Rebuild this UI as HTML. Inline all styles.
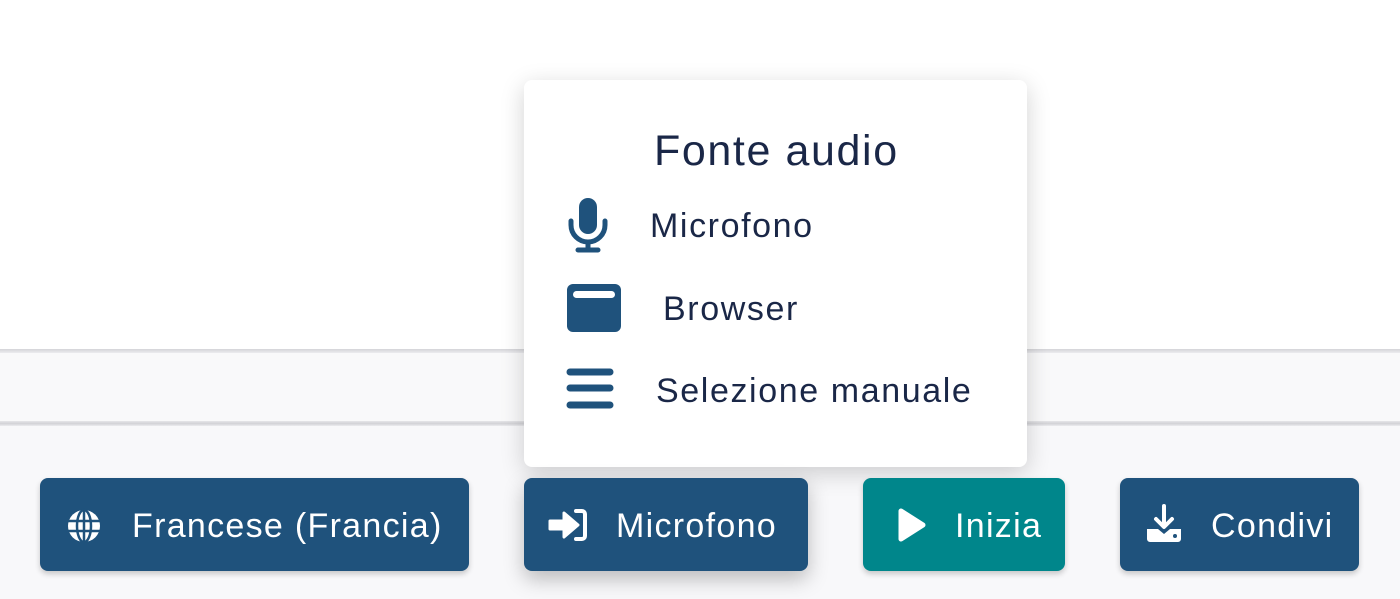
<!DOCTYPE html>
<html><head><style>
*{margin:0;padding:0;box-sizing:border-box}
body{width:1400px;height:599px;overflow:hidden;background:#f8f8fa;position:relative;font-family:"Liberation Sans",sans-serif}
.top{position:absolute;left:0;top:0;width:1400px;height:350px;background:#fff}
.l1{position:absolute;left:0;top:349px;width:1400px;height:4px;background:linear-gradient(#d4d4d8,#ececef)}
.band{position:absolute;left:0;top:353px;width:1400px;height:69px;background:#f9f9fa}
.l2{position:absolute;left:0;top:421px;width:1400px;height:5px;background:linear-gradient(#e6e6e9,#d2d2d6,#ececef)}
.pop{position:absolute;left:524px;top:80px;width:503px;height:387px;background:#fff;border-radius:8px;box-shadow:0 6px 24px rgba(0,0,0,.18)}
.t{position:absolute;color:#1a2747;white-space:nowrap;letter-spacing:1.6px}
.btn{position:absolute;top:478px;height:93px;border-radius:8px;background:#1f527c;box-shadow:0 3px 6px rgba(0,0,0,.2);color:#fff;font-size:34px;letter-spacing:1.3px}
.btn span{position:absolute;top:29px;white-space:nowrap}
.btn svg{position:absolute}
</style></head><body>
<div class="top"></div><div class="l1"></div><div class="band"></div><div class="l2"></div>
<div class="pop">
<div class="t" style="left:130px;top:47px;font-size:43px">Fonte audio</div>
<svg style="position:absolute;left:42px;top:117px" width="44" height="56" viewBox="0 0 44 56"><rect x="13" y="1" width="18" height="36" rx="9" fill="#1f527c"/><path d="M5 24v4a17 17 0 0 0 34 0v-4" stroke="#1f527c" stroke-width="5" fill="none" stroke-linecap="round"/><path d="M22 45v6M12 53h20" stroke="#1f527c" stroke-width="5" stroke-linecap="round"/></svg>
<div class="t" style="left:126px;top:127px;font-size:34px">Microfono</div>
<svg style="position:absolute;left:42px;top:203px" width="56" height="50" viewBox="0 0 56 50"><rect x="1" y="1" width="54" height="48" rx="6" fill="#1f527c"/><rect x="7" y="8" width="42" height="7" rx="3.5" fill="#fff"/></svg>
<div class="t" style="left:139px;top:210px;font-size:34px">Browser</div>
<svg style="position:absolute;left:42px;top:288px" width="48" height="46" viewBox="0 0 48 46"><path d="M4 4h40M4 20h40M4 37h40" stroke="#1f527c" stroke-width="7" stroke-linecap="round"/></svg>
<div class="t" style="left:132px;top:292px;font-size:34px">Selezione manuale</div>
</div>
<div class="btn" style="left:40px;width:429px"><svg style="left:26px;top:30px" width="36" height="36" viewBox="0 0 36 36"><circle cx="18" cy="18" r="16" fill="#fff"/><path d="M2 13h32M2 23h32M18 2v32" stroke="#1f527c" stroke-width="2.5"/><ellipse cx="18" cy="18" rx="7" ry="16" fill="none" stroke="#1f527c" stroke-width="2.5"/></svg><span style="left:92px">Francese (Francia)</span></div>
<div class="btn" style="left:524px;width:284px;box-shadow:0 8px 20px rgba(0,0,0,.25)"><svg style="left:24px;top:30px" width="40" height="34" viewBox="0 0 40 34"><path d="M2 13h14V5l14 12-14 12v-8H2z" fill="#fff" stroke="#fff" stroke-width="3" stroke-linejoin="round"/><path d="M28 3h6a3 3 0 0 1 3 3v22a3 3 0 0 1-3 3h-6" stroke="#fff" stroke-width="4" fill="none" stroke-linecap="round"/></svg><span style="left:92px">Microfono</span></div>
<div class="btn" style="left:863px;width:202px;background:#00868b"><svg style="left:34px;top:29px" width="30" height="36" viewBox="0 0 30 36"><path d="M4 4l22 14L4 32z" fill="#fff" stroke="#fff" stroke-width="5" stroke-linejoin="round"/></svg><span style="left:92px">Inizia</span></div>
<div class="btn" style="left:1120px;width:239px"><svg style="left:24px;top:26px" width="40" height="40" viewBox="0 0 40 40"><path d="M20 2v20M12 15l8 8 8-8" stroke="#fff" stroke-width="4" fill="none" stroke-linecap="round" stroke-linejoin="round"/><path d="M3 25h11l6 5 6-5h11v10a3 3 0 0 1-3 3H6a3 3 0 0 1-3-3z" fill="#fff"/><circle cx="31" cy="32" r="2" fill="#1f527c"/></svg><span style="left:91px">Condivi</span></div>
</body></html>
